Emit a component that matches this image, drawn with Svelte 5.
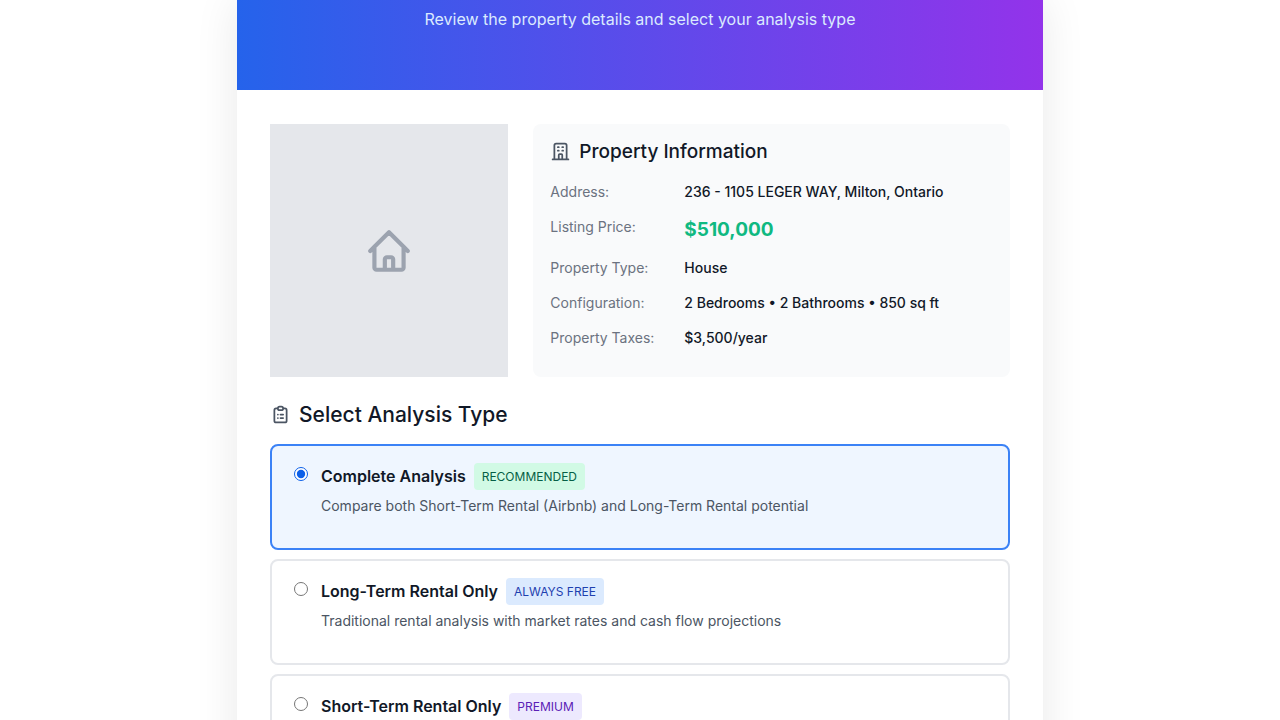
<script>
  let selected = $state('complete');

  const details = [
    { label: 'Address:', value: '236 - 1105 LEGER WAY, Milton, Ontario' },
    { label: 'Listing Price:', value: '$510,000', price: true },
    { label: 'Property Type:', value: 'House' },
    { label: 'Configuration:', value: '2 Bedrooms • 2 Bathrooms • 850 sq ft' },
    { label: 'Property Taxes:', value: '$3,500/year' },
  ];

  const options = [
    {
      id: 'complete',
      title: 'Complete Analysis',
      badge: 'RECOMMENDED',
      tone: 'green',
      text: 'Compare both Short-Term Rental (Airbnb) and Long-Term Rental potential',
    },
    {
      id: 'long',
      title: 'Long-Term Rental Only',
      badge: 'ALWAYS FREE',
      tone: 'blue',
      text: 'Traditional rental analysis with market rates and cash flow projections',
    },
    { id: 'short', title: 'Short-Term Rental Only', badge: 'PREMIUM', tone: 'purple' },
  ];
</script>

<main class="sheet">
  <header class="banner">
    <p>Review the property details and select your analysis type</p>
  </header>

  <div class="content">
    <section class="property">
      <div class="photo">
        <svg class="home" viewBox="0 0 24 24" aria-hidden="true">
          <path d="M3 12l2-2m0 0l7-7 7 7M5 10v10a1 1 0 001 1h3m10-11l2 2m-2-2v10a1 1 0 01-1 1h-3m-6 0a1 1 0 001-1v-4a1 1 0 011-1h2a1 1 0 011 1v4a1 1 0 001 1m-6 0h6" />
        </svg>
      </div>

      <div class="info">
        <h2>
          <svg viewBox="0 0 24 24" aria-hidden="true">
            <path d="M19 21V5a2 2 0 00-2-2H7a2 2 0 00-2 2v16m14 0h2m-2 0h-5m-9 0H3m2 0h5M9 7h1m-1 4h1m4-4h1m-1 4h1m-5 10v-5a1 1 0 011-1h2a1 1 0 011 1v5m-4 0h4" />
          </svg>
          Property Information
        </h2>
        <dl>
          {#each details as row}
            <div class="row">
              <dt>{row.label}</dt>
              <dd class:price={row.price}>{row.value}</dd>
            </div>
          {/each}
        </dl>
      </div>
    </section>

    <h2 class="select-title" id="analysis-heading">
      <svg viewBox="0 0 24 24" aria-hidden="true">
        <path d="M9 5H7a2 2 0 00-2 2v12a2 2 0 002 2h10a2 2 0 002-2V7a2 2 0 00-2-2h-2M9 5a2 2 0 002 2h2a2 2 0 002-2M9 5a2 2 0 012-2h2a2 2 0 012 2m-3 7h3m-3 4h3m-6-4h.01M9 16h.01" />
      </svg>
      Select Analysis Type
    </h2>

    <div class="options" role="radiogroup" aria-labelledby="analysis-heading">
      {#each options as option}
        <label class="option" class:selected={selected === option.id} for={option.id}>
          <input type="radio" name="analysis" id={option.id} value={option.id} bind:group={selected} />
          <span class="body">
            <span class="line">
              <span class="title">{option.title}</span>
              <span class="badge {option.tone}">{option.badge}</span>
            </span>
            {#if option.text}
              <span class="text">{option.text}</span>
            {/if}
          </span>
        </label>
      {/each}
    </div>
  </div>
</main>

<style>
  :global(body) {
    background: #ffffff;
    color: #111827;
    font-family: Inter, 'Open Sans', sans-serif;
  }

  .sheet {
    box-sizing: border-box;
    max-width: 806px;
    margin: 0 auto;
    background: #ffffff;
    box-shadow: 0 0 42px rgba(0, 0, 0, 0.09);
  }

  .banner {
    padding: 6px 33px 58px;
    background: linear-gradient(to right, #2563eb, #9333ea);
    color: #dbeafe;
    text-align: center;
  }

  .banner p {
    margin: 0;
    font-size: 16px;
    line-height: 26px;
  }

  .content {
    padding: 34px 33px;
  }

  .property {
    display: grid;
    grid-template-columns: 1fr 2fr;
    gap: 25px;
  }

  .photo {
    display: grid;
    place-items: center;
    min-height: 253px;
    background: #e5e7eb;
  }

  svg {
    flex: none;
    width: 21px;
    height: 21px;
    fill: none;
    stroke: #4b5563;
    stroke-width: 2;
    stroke-linecap: round;
    stroke-linejoin: round;
  }

  .home {
    width: 50px;
    height: 50px;
    stroke: #9ca3af;
  }

  .info {
    padding: 17px;
    border-radius: 8px;
    background: #f9fafb;
  }

  h2 {
    display: flex;
    align-items: center;
    gap: 8px;
    margin: 0;
    font-size: 19px;
    line-height: 21px;
    font-weight: 500;
  }

  dl {
    display: grid;
    gap: 13px;
    margin: 19px 0 0;
  }

  .row {
    display: grid;
    grid-template-columns: 134px 1fr;
    font-size: 14px;
    line-height: 22px;
  }

  dt {
    color: #6b7280;
  }

  dd {
    margin: 0;
    font-weight: 500;
  }

  .price {
    color: #10b981;
    font-size: 19px;
    line-height: 28px;
    font-weight: 700;
  }

  .select-title {
    margin: 25px 0 17px;
    font-size: 21px;
    line-height: 25px;
  }

  .options {
    display: grid;
    gap: 9px;
  }

  .option {
    display: flex;
    align-items: flex-start;
    gap: 13px;
    padding: 17px 17px 31px;
    border: 2px solid #e5e7eb;
    border-radius: 8px;
    cursor: pointer;
  }

  .option.selected {
    border-color: #3b82f6;
    background: #eff6ff;
  }

  input {
    flex: none;
    width: 14px;
    height: 14px;
    margin: 4px 0 0 5px;
    accent-color: #0b5fe8;
  }

  .body {
    display: grid;
    gap: 5px;
  }

  .line {
    display: flex;
    align-items: center;
    gap: 8px;
  }

  .title {
    font-size: 16px;
    line-height: 27px;
    font-weight: 600;
  }

  .badge {
    padding: 4px 8px;
    border-radius: 4px;
    font-size: 12px;
    line-height: 19px;
    font-weight: 400;
  }

  .green {
    background: #d1fae5;
    color: #065f46;
  }

  .blue {
    background: #dbeafe;
    color: #1e40af;
  }

  .purple {
    background: #ede9fe;
    color: #5b21b6;
  }

  .text {
    color: #4b5563;
    font-size: 14px;
    line-height: 22px;
  }
</style>
